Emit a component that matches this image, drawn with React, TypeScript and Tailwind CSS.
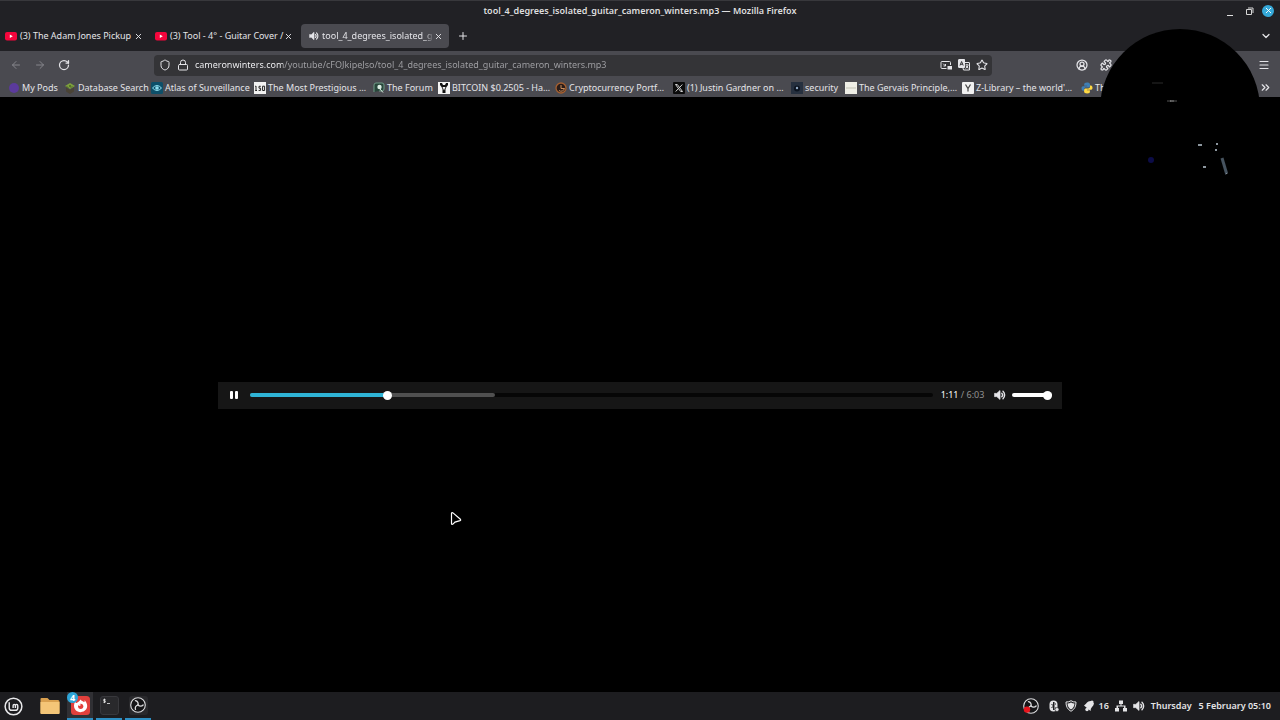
import { useState } from "react";
import type { ReactNode } from "react";
import { ArrowLeft, ArrowRight, ChevronDown, ChevronsRight, CircleUserRound, Lock, Menu, Plus, Puzzle, RotateCw, Shield, Star, X } from "lucide-react";

const TRACK = "tool_4_degrees_isolated_guitar_cameron_winters.mp3";

function YouTubeIcon() {
  return (
    <svg className="h-3 w-3 shrink-0" viewBox="0 0 12 12">
      <rect x="0" y="2" width="12" height="8.4" rx="2" fill="#f5063c" />
      <path d="M4.8 4.4v3.6l3-1.8z" fill="#fff" />
    </svg>
  );
}

function SpeakerIcon({ className }: { className: string }) {
  return (
    <svg className={className} viewBox="0 0 12 12" fill="none" stroke="currentColor" strokeWidth="1.4" strokeLinecap="round">
      <path d="M.8 4.4h2L6 1.6v8.8L2.8 7.6h-2z" fill="currentColor" strokeWidth=".8" strokeLinejoin="round" />
      <path d="M7.8 4.2a2.6 2.6 0 0 1 0 3.6M9 2.3a5 5 0 0 1 0 7.4" />
    </svg>
  );
}

function ObsIcon({ recording = false }: { recording?: boolean }) {
  return (
    <svg className="size-4" viewBox="0 0 16 16" fill="none" stroke="#dcdcde" strokeLinecap="round">
      <circle cx="8" cy="8" r="7.3" fill="#151517" strokeWidth="1.1" />
      <path d="M8 8C8.600 5.600 7.400 4 5.400 3.600" strokeWidth="1.300" />
      <path d="M8 8C8.600 5.600 7.400 4 5.400 3.600" strokeWidth="1.300" transform="rotate(120 8 8)" />
      <path d="M8 8C8.600 5.600 7.400 4 5.400 3.600" strokeWidth="1.300" transform="rotate(240 8 8)" />
      {recording && <circle cx="4" cy="11.600" r="3.200" fill="#e8141c" stroke="none" />}
    </svg>
  );
}

const bookmarks: { title: string; width: string; icon: ReactNode }[] = [
  {
    title: "My Pods",
    width: "w-14",
    icon: <circle cx="6" cy="6" r="5" fill="#5b3a9c" />,
  },
  {
    title: "Database Search",
    width: "w-[87px]",
    icon: (
      <>
        <path d="M2 5.500 6 8l4-2.500v4L6 12 2 9.500z" fill="#4a4335" />
        <path d="m1 4 5-3 5 3-5 3z" fill="#7da03c" />
        <path d="m3 4.500 1 1M6 3v2M8 4.500l-1 1" stroke="#2e4418" />
      </>
    ),
  },
  {
    title: "Atlas of Surveillance",
    width: "w-[103px]",
    icon: (
      <>
        <rect width="12" height="12" rx="1.500" fill="#0d4f69" />
        <path d="M1.500 6q4.500-5 9 0-4.500 5-9 0z" fill="none" stroke="#8fe0f2" />
        <circle cx="6" cy="6" r="1.800" fill="#8fe0f2" />
      </>
    ),
  },
  {
    title: "The Most Prestigious …",
    width: "w-[119px]",
    icon: (
      <>
        <rect width="12" height="12" fill="#f2f2f2" />
        <path d="M2 4v4.500M1.200 8.500h1.800M1.200 4.400 2 4M6.800 4.300H5v1.900h1.600v2.200H4.600M8.600 4.200h2v4.300h-2z" fill="none" stroke="#222" />
      </>
    ),
  },
  {
    title: "The Forum",
    width: "w-[65px]",
    icon: (
      <>
        <path d="M1 10V3q0-2 2-2h6q2 0 2 2v4q0 2-2 2H6" fill="#28473b" stroke="#6f9a86" />
        <circle cx="6.500" cy="5" r="2.200" fill="#dceee4" />
        <path d="m7 7 3 3.500" stroke="#dceee4" />
      </>
    ),
  },
  {
    title: "BITCOIN $0.2505 - Ha…",
    width: "w-[117px]",
    icon: (
      <>
        <rect width="12" height="12" fill="#f4f4f4" />
        <path d="M2 1h2l1 2h2l1-2h2v2L8.500 5 7.500 7v4h-3V7l-1-2L2 3z" fill="#111" />
        <path d="M4.500 5h3L6 8.500z" fill="#f4f4f4" />
      </>
    ),
  },
  {
    title: "Cryptocurrency Portf…",
    width: "w-[118px]",
    icon: (
      <>
        <circle cx="6" cy="6" r="5" fill="#2a1c18" stroke="#a65f30" strokeWidth="1.300" />
        <path d="M6 3v3.500h3.500A3.500 3.500 0 0 1 4 8.500" stroke="#c98d5c" fill="none" />
      </>
    ),
  },
  {
    title: "(1) Justin Gardner on …",
    width: "w-[118px]",
    icon: (
      <>
        <rect width="12" height="12" rx="1" fill="#0b0b0b" />
        <path d="M2.500 2.500h1.800l5.200 7H7.700zM9.300 2.500 6.700 5.400M5.300 6.700 2.700 9.500" fill="none" stroke="#e8e8e8" strokeWidth=".9" />
      </>
    ),
  },
  {
    title: "security",
    width: "w-[54px]",
    icon: (
      <>
        <rect width="12" height="12" fill="#26303f" />
        <circle cx="6" cy="6.500" r="3" fill="#0c1420" />
        <circle cx="6" cy="6" r="1.200" fill="#93a9c4" />
      </>
    ),
  },
  {
    title: "The Gervais Principle,…",
    width: "w-[117px]",
    icon: (
      <>
        <rect width="12" height="12" fill="#eeeee6" />
        <path d="M1 6h10" stroke="#c2c2b4" />
      </>
    ),
  },
  {
    title: "Z-Library – the world'…",
    width: "w-[119px]",
    icon: (
      <>
        <rect width="12" height="12" rx="1" fill="#f1f1f1" />
        <path d="m3.500 2.500 2.500 4 2.500-4M6 6.500v3" fill="none" stroke="#444" strokeWidth="1.200" />
      </>
    ),
  },
  {
    title: "Th",
    width: "w-[65px]",
    icon: (
      <>
        <path d="M6 .5c-2.500 0-2.800 1-2.800 2v1.300h3v.5H2C.8 4.300.5 5.500.5 6.300c0 1.400.6 2.400 1.700 2.400h1V7.300c0-1 .8-1.700 1.800-1.700h2.600c.9 0 1.400-.7 1.400-1.500V2.400C9 1 7.600.5 6 .5z" fill="#3f7fb5" />
        <path d="M6.100 11.500c2.500 0 2.800-1 2.800-2V8.200h-3v-.5h4.200c1.200 0 1.400-1.200 1.400-2s-.5-2.300-1.600-2.300H9v1.400c0 1-.9 1.600-1.800 1.600H4.600c-.9 0-1.500.7-1.500 1.500v1.700c0 1.400 1.400 1.900 3 1.900z" fill="#ffd943" />
      </>
    ),
  },
];

function TitleBar() {
  return (
    <header className="grid h-[21px] grid-cols-[1fr_auto_1fr] items-center border-t border-[#38383c] px-[6px] pb-px">
      <span />
      <h1 className="font-semibold text-[#dededf]">{TRACK} — Mozilla Firefox</h1>
      <div className="flex items-center justify-end gap-[7px]">
        <button aria-label="Minimize" className="flex size-3 items-end justify-center pb-px">
          <span className="h-px w-1.5 bg-[#e0e0e0]" />
        </button>
        <button aria-label="Restore">
          <svg className="size-3" viewBox="0 0 12 12" fill="none" stroke="#d6d6d6">
            <path d="M3.500 4.500h5v5h-5zM5 3h5v5" />
          </svg>
        </button>
        <button aria-label="Close window" className="flex size-3 items-center justify-center rounded-full bg-[#35a8d8] text-white">
          <X size={9} strokeWidth={2.500} />
        </button>
      </div>
    </header>
  );
}

function Tab({ title, icon, active = false }: { title: string; icon: ReactNode; active?: boolean }) {
  return (
    <div className={active ? "flex h-6 w-[148px] items-center rounded-[4px] bg-[#4a4a50] pr-1.5 pl-2" : "flex h-6 w-[148px] items-center rounded-[4px] pr-1.5 pl-1"}>
      <button role="tab" aria-selected={active} className="flex min-w-0 flex-1 items-center gap-[3px] text-left">
        {icon}
        <span className={active ? "min-w-0 flex-1 overflow-hidden mask-r-from-92% mask-r-to-100% whitespace-nowrap" : "min-w-0 flex-1 whitespace-nowrap"}>{title}</span>
      </button>
      <button aria-label="Close tab">
        <X size={9} strokeWidth={2.500} />
      </button>
    </div>
  );
}

function TabStrip() {
  return (
    <div className="flex h-[30px] items-center pl-px">
      <div role="tablist" className="flex gap-[2px]">
        <Tab title="(3) The Adam Jones Pickup" icon={<YouTubeIcon />} />
        <Tab title="(3) Tool - 4° - Guitar Cover /" icon={<YouTubeIcon />} />
        <Tab active title="tool_4_degrees_isolated_g" icon={<SpeakerIcon className="size-2.5 shrink-0" />} />
      </div>
      <button aria-label="New tab" className="ml-2">
        <Plus size={12} />
      </button>
      <button aria-label="List all tabs" className="mr-2 ml-auto">
        <ChevronDown size={12} strokeWidth={2.500} />
      </button>
    </div>
  );
}

function NavBar() {
  const [url, setUrl] = useState("cameronwinters.com/youtube/cFOJkipeJso/" + TRACK);

  return (
    <nav className="flex h-7 items-center bg-[#4a4a50] px-2.5">
      <div className="flex w-36 items-center gap-3">
        <button aria-label="Back" className="text-[#85858b]"><ArrowLeft size={12} /></button>
        <button aria-label="Forward" className="text-[#85858b]"><ArrowRight size={12} /></button>
        <button aria-label="Reload"><RotateCw size={12} strokeWidth={2.500} /></button>
      </div>
      <div className="flex h-[21px] w-[838px] items-center gap-1.5 rounded-[4px] bg-[#343437] pr-1 pl-[5px]">
        <Shield size={12} />
        <Lock size={12} />
        <input
          aria-label="Address"
          value={url}
          onChange={(e) => setUrl(e.target.value)}
          className="min-w-0 flex-1 bg-[linear-gradient(to_right,#fbfbfe_88px,#a3a3a7_88px)] bg-clip-text text-transparent outline-none"
        />
        <button aria-label="Picture in picture">
          <svg className="size-3" viewBox="0 0 12 12" fill="none" stroke="currentColor">
            <path d="M6.500 9.500H2q-1 0-1-1v-5q0-1 1-1h7.500q1 0 1 1V6M3.200 4.700l2 2M5.500 5v2h-2" />
            <rect x="8" y="7.500" width="3.500" height="2.500" fill="currentColor" />
          </svg>
        </button>
        <button aria-label="Translate page">
          <svg className="size-3" viewBox="0 0 12 12" fill="none" stroke="currentColor">
            <path d="M1 .5h5.500v8H1q-.5 0-.5-.5V1q0-.5.500-.5z" fill="currentColor" />
            <path d="m2 6.500 1.600-4 1.600 4M2.500 5.300h2.200" stroke="#343437" />
            <path d="M7 3.500h4q.5 0 .5.500v7H5.500L5 9M7.500 6h3M9 5v1M10 6.500q-.5 2-2.500 2.800M8 7q.7 1.500 2.500 2.200" />
          </svg>
        </button>
        <button aria-label="Bookmark this page"><Star size={12} strokeWidth={2.200} /></button>
      </div>
      <div className="ml-auto flex items-center">
        <button aria-label="Account" className="mr-3"><CircleUserRound size={12} strokeWidth={2.500} /></button>
        <button aria-label="Extensions" className="mr-[146px]"><Puzzle size={12} strokeWidth={2.500} /></button>
        <button aria-label="Open application menu"><Menu size={12} strokeWidth={2.200} /></button>
      </div>
    </nav>
  );
}

function BookmarksBar() {
  return (
    <div className="flex h-[18px] items-center bg-[#4a4a50] px-2 pb-px">
      {bookmarks.map((b) => (
        <a key={b.title} href="#" className={`${b.width} flex shrink-0 items-center gap-[2px] whitespace-nowrap`}>
          <svg className="size-3 shrink-0" viewBox="0 0 12 12">{b.icon}</svg>
          {b.title}
        </a>
      ))}
      <button aria-label="More bookmarks" className="ml-auto"><ChevronsRight size={13} strokeWidth={2.200} /></button>
    </div>
  );
}

function Player() {
  const [time, setTime] = useState(71.9);
  const [volume, setVolume] = useState(100);
  const thumb =
    "absolute inset-0 h-full w-full appearance-none bg-transparent [&::-webkit-slider-thumb]:size-[9px] [&::-webkit-slider-thumb]:appearance-none [&::-webkit-slider-thumb]:rounded-full [&::-webkit-slider-thumb]:bg-white";

  return (
    <div className="flex h-[27px] w-[66%] items-center bg-[#161616] pr-2.5 pb-px pl-3">
      <button aria-label="Pause" className="flex w-5 gap-[2px]">
        <span className="h-2 w-[3px] rounded-[1px] bg-white" />
        <span className="h-2 w-[3px] rounded-[1px] bg-white" />
      </button>
      <div className="relative flex h-3 flex-1 items-center">
        <div className="relative h-1 w-full rounded-full bg-[#060606]">
          <div className="absolute h-1 w-[36%] rounded-full bg-[#505050]" />
          <div className="absolute h-1 rounded-full bg-[#2fb4d6]" style={{ width: `${(time / 363) * 100}%` }} />
        </div>
        <input type="range" aria-label="Position" min={0} max={363} step="any" value={time} onChange={(e) => setTime(+e.target.value)} className={thumb} />
      </div>
      <div className="mr-2.5 ml-2 whitespace-nowrap text-[#929292]">
        <span className="text-white">1:11</span> / 6:03
      </div>
      <button aria-label="Mute" className="mr-1.5"><SpeakerIcon className="size-3" /></button>
      <div className="relative flex h-3 w-10 items-center">
        <div className="h-1 w-full rounded-full bg-white" />
        <input type="range" aria-label="Volume" value={volume} onChange={(e) => setVolume(+e.target.value)} className={thumb} />
      </div>
    </div>
  );
}

function Taskbar() {
  return (
    <footer className="flex h-7 items-center bg-[#1d1d20] pl-1">
      <button aria-label="Menu" className="mr-[15px]">
        <svg className="size-[19px]" viewBox="0 0 20 20" fill="none" stroke="#e8e8ea">
          <circle cx="10" cy="10" r="8.800" strokeWidth="1.600" />
          <path d="M5.500 5.500v6q0 2.500 2.500 2.500h4q2.500 0 2.500-2.500V9.200q0-1.400-1.200-1.400T12 9.200V11.500M12 9.200q0-1.400-1.200-1.400T9.600 9.200V11.500" strokeWidth="1.500" />
        </svg>
      </button>
      <button aria-label="Files" className="flex h-full w-6 items-center justify-center">
        <svg className="size-5" viewBox="0 0 20 20">
          <path d="M.5 3q0-1 1-1h6l2 2H18q1.500 0 1.500 1.500V17q0 1-1 1h-17q-1 0-1-1z" fill="#d9a04f" />
          <path d="M.5 6h19v11q0 1-1 1h-17q-1 0-1-1z" fill="#f4c577" />
        </svg>
      </button>
      <div className="ml-[5px] flex h-full gap-[3px]">
        <button aria-label="Firefox, 4 windows" className="relative flex h-full w-[26px] items-center justify-center border-b-2 border-[#2d8fc4] bg-[#303034]">
          <svg className="size-[19px]" viewBox="0 0 19 19">
            <rect width="19" height="19" rx="3.500" fill="#e2403c" />
            <path d="M9.500 3.500c1 1.500 2.500 1.600 3.500 2.600C14 5.800 13.700 4.700 13.500 4c3 3 3.500 7 1.500 9.600-2.500 3.200-7.800 3.400-10.500.4C2.400 11.500 2.600 7.900 4.300 5.500c.1 1 .5 1.500 1.200 1.600C6.700 6.500 8.500 5.500 9.500 3.500z" fill="#fff" />
            <circle cx="9.700" cy="10.300" r="2.600" fill="#e2403c" />
            <path d="M6.500 8.200q2-.8 3.600.8l-2 1z" fill="#fff" />
          </svg>
          <span className="absolute top-0 left-0 flex size-[11px] items-center justify-center rounded-full bg-[#2da5d8] leading-none font-bold text-white">4</span>
        </button>
        <button aria-label="Terminal" className="flex h-full w-[26px] items-center justify-center border-b-2 border-[#2d8fc4]">
          <svg className="size-[19px]" viewBox="0 0 19 19" fill="none" stroke="#e8e8e8">
            <rect x=".5" y=".5" width="18" height="18" rx="2.500" fill="#29292c" stroke="#38383c" />
            <path d="M5.500 3.500H3.700v1.300h1.600v1.400H3.300M4.500 2.600v4.500M7 7.500h3" strokeWidth=".8" />
          </svg>
        </button>
        <button aria-label="OBS Studio" className="flex h-full w-[26px] items-center justify-center border-b-2 border-[#2d8fc4]">
          <span className="flex size-[19px] items-center justify-center rounded-[3px] bg-[#29292c]"><ObsIcon /></span>
        </button>
      </div>

      <div className="ml-auto flex items-center gap-1.5 font-semibold text-[#e4e4e6]">
        <span className="mr-1"><ObsIcon recording /></span>
        <svg className="h-3 w-2.5" viewBox="0 0 10 12">
          <rect x=".5" y=".5" width="8" height="11" rx="4" fill="#e4e4e6" />
          <path d="m2.500 4 4 4-2 2V2l2 2-4 4" fill="none" stroke="#1d1d20" />
          <circle cx="8" cy="9.500" r="2" fill="#e4e4e6" stroke="#1d1d20" strokeWidth=".6" />
        </svg>
        <svg className="size-3" viewBox="0 0 12 12" fill="none" stroke="#e4e4e6">
          <path d="M6 .7Q8 2.200 11 2q.2 6.500-5 9.300Q.8 8.500 1 2q3 .2 5-1.300z" />
          <path d="M6 2.500q1.500 1 3.500 1Q9.300 7.500 6 9.600 2.700 7.500 2.500 3.500q2 0 3.500-1z" fill="#e4e4e6" stroke="none" />
        </svg>
        <span className="flex items-center gap-1">
          <svg className="size-3" viewBox="0 0 12 12" fill="#e4e4e6">
            <path d="M1 5.500q2-1.500 3-3T7.500 1q2 .3 3.500 2.500-.5 2-2 3.500t-1.500 4z" />
            <circle cx="4" cy="9.500" r="1.700" />
            <circle cx="9" cy="2" r="1.600" />
          </svg>
          16
        </span>
        <svg className="size-3" viewBox="0 0 12 12" fill="#e4e4e6">
          <path d="M4 .5h4V4H6.500v1.500h4V8H12v3.500H8V8h1V6.500H3V8h1v3.500H0V8h1.500V5.500h4V4H4z" />
        </svg>
        <SpeakerIcon className="size-3" />
        <time className="mr-[9px] whitespace-pre">Thursday   5 February 05:10</time>
      </div>
    </footer>
  );
}

export default function App() {
  return (
    <div className="relative flex min-h-screen flex-col overflow-hidden bg-[#212125] font-['Noto_Sans',sans-serif] text-[9px] leading-3 text-[#e4e4e8]">
      <TitleBar />
      <TabStrip />
      <NavBar />
      <BookmarksBar />
      <main className="flex flex-1 items-center justify-center bg-black pt-0.5">
        <Player />
      </main>
      <Taskbar />

      {/* webcam bubble */}
      <div className="absolute top-[29px] right-5 size-40 overflow-hidden rounded-full bg-black">
        <svg viewBox="0 0 160 160" fill="none">
          <path d="M52 54h11" stroke="#2a2a2a" />
          <path d="M67 72h4M74 72h3" stroke="#555" />
          <path d="M70 72h4" stroke="#aaa" />
          <circle cx="51" cy="131" r="3" fill="#0c0c48" />
          <path d="m122 129 5 17" stroke="#46535f" strokeWidth="3" />
          <path d="M98 116h4M103 138h3M117 114v2M116 120v2M126 145h2" stroke="#8c969e" strokeWidth="2" />
        </svg>
      </div>

      {/* mouse pointer */}
      <svg className="pointer-events-none absolute top-[511px] left-[450px] h-4 w-3" viewBox="0 0 12 16" fill="#000" stroke="#fff">
        <path d="M1.500 2.500v10q.2 1.500 1.500.6l2-2 5-1.500q1.200-.5.400-1.300l-7.400-6.400q-1.200-.8-1.500.6z" strokeWidth="1.200" />
      </svg>
    </div>
  );
}
